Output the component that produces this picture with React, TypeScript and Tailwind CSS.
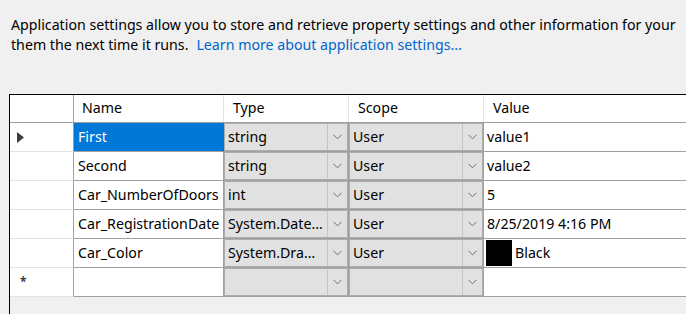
import React from 'react';

interface SettingRow {
  name: string;
  type: string;
  scope: string;
  value: string;
  swatch?: string;
}

const rows: SettingRow[] = [
  { name: 'First', type: 'string', scope: 'User', value: 'value1' },
  { name: 'Second', type: 'string', scope: 'User', value: 'value2' },
  { name: 'Car_NumberOfDoors', type: 'int', scope: 'User', value: '5' },
  { name: 'Car_RegistrationDate', type: 'System.Date…', scope: 'User', value: '8/25/2019 4:16 PM' },
  { name: 'Car_Color', type: 'System.Dra…', scope: 'User', value: 'Black', swatch: '#000000' },
];

const Chevron = () => (
  <svg width="9" height="6" viewBox="0 0 9 6" className="block">
    <polyline points="0.5,0.8 4.5,4.8 8.5,0.8" fill="none" stroke="#6d6d6d" strokeWidth="1" />
  </svg>
);

// grey combo box drawn inside a grid cell
const ComboCell = ({ text, width }: { text: string; width: string }) => (
  <div className={`${width} h-full shrink-0 border-r border-[#a0a0a0]`}>
    <div className="h-full flex bg-[#e1e1e1] border border-[#adadad]">
      <div className="flex-1 flex items-center pl-[3px] whitespace-nowrap overflow-hidden">{text}</div>
      <div className="w-[20px] h-full border-l border-[#c4c4c4] flex items-center justify-center">
        <Chevron />
      </div>
    </div>
  </div>
);

const RowArrow = () => (
  <svg width="8" height="11" viewBox="0 0 8 11" className="block">
    <polygon points="0,0 7,5.5 0,11" fill="#3c3c3c" />
  </svg>
);

export default function App() {
  return (
    <div className="w-[686px] h-[314px] bg-[#f0f0f0] overflow-hidden flex flex-col font-['Noto_Sans',sans-serif] text-[14.2px] text-black">
      <div className="pl-[11px] pt-[15px] leading-[20px] whitespace-nowrap">
        <div>Application settings allow you to store and retrieve property settings and other information for your</div>
        <div>
          them the next time it runs.
          <span className="text-[#0066cc] ml-[8px]">Learn more about application settings...</span>
        </div>
      </div>

      <div className="mt-[39px] ml-[9px] flex-1 w-[720px] border-l border-t border-black flex flex-col leading-none">
        {/* header */}
        <div className="h-[28px] flex shrink-0 bg-white border-b border-[#a0a0a0]">
          <div className="w-[64px] shrink-0 border-r border-[#a0a0a0]" />
          <div className="w-[150px] shrink-0 border-r border-[#e3e3e3] flex items-center pl-[8px]">Name</div>
          <div className="w-[125px] shrink-0 border-r border-[#e3e3e3] flex items-center pl-[9px]">Type</div>
          <div className="w-[135px] shrink-0 border-r border-[#e3e3e3] flex items-center pl-[9px]">Scope</div>
          <div className="flex-1 flex items-center pl-[9px]">Value</div>
        </div>

        {rows.map((row, i) => (
          <div key={row.name} className="h-[29px] flex shrink-0">
            <div className="w-[64px] shrink-0 bg-white border-r border-[#a0a0a0] border-b border-b-[#e3e3e3] flex items-center pl-[7px]">
              {i === 0 && <RowArrow />}
            </div>
            <div
              className={`w-[150px] shrink-0 border-b border-[#a0a0a0] flex items-center pl-[4px] whitespace-nowrap ${
                i === 0 ? 'bg-[#0078d7] text-white border-r border-r-[#0078d7]' : 'bg-white border-r'
              }`}
            >
              {row.name}
            </div>
            <div className="flex h-full border-b border-[#a0a0a0]">
              <ComboCell text={row.type} width="w-[125px]" />
              <ComboCell text={row.scope} width="w-[135px]" />
            </div>
            <div className="flex-1 bg-white border-b border-[#a0a0a0] flex items-center pl-[3px] whitespace-nowrap">
              {row.swatch ? (
                <>
                  <div className="w-[26px] h-[26px] ml-[-1px] mr-[3px] bg-black" />
                  {row.value}
                </>
              ) : (
                row.value
              )}
            </div>
          </div>
        ))}

        {/* new row */}
        <div className="h-[29px] flex shrink-0">
          <div className="w-[64px] shrink-0 bg-white border-r border-[#a0a0a0] border-b border-b-[#e3e3e3] flex items-center pl-[10px] text-[12px] text-[#3c3c3c] font-bold">
            *
          </div>
          <div className="w-[150px] shrink-0 bg-white border-r border-b border-[#a0a0a0]" />
          <div className="flex h-full border-b border-[#a0a0a0]">
            <ComboCell text="" width="w-[125px]" />
            <ComboCell text="" width="w-[135px]" />
          </div>
          <div className="flex-1 bg-white border-b border-[#a0a0a0]" />
        </div>
      </div>
    </div>
  );
}
